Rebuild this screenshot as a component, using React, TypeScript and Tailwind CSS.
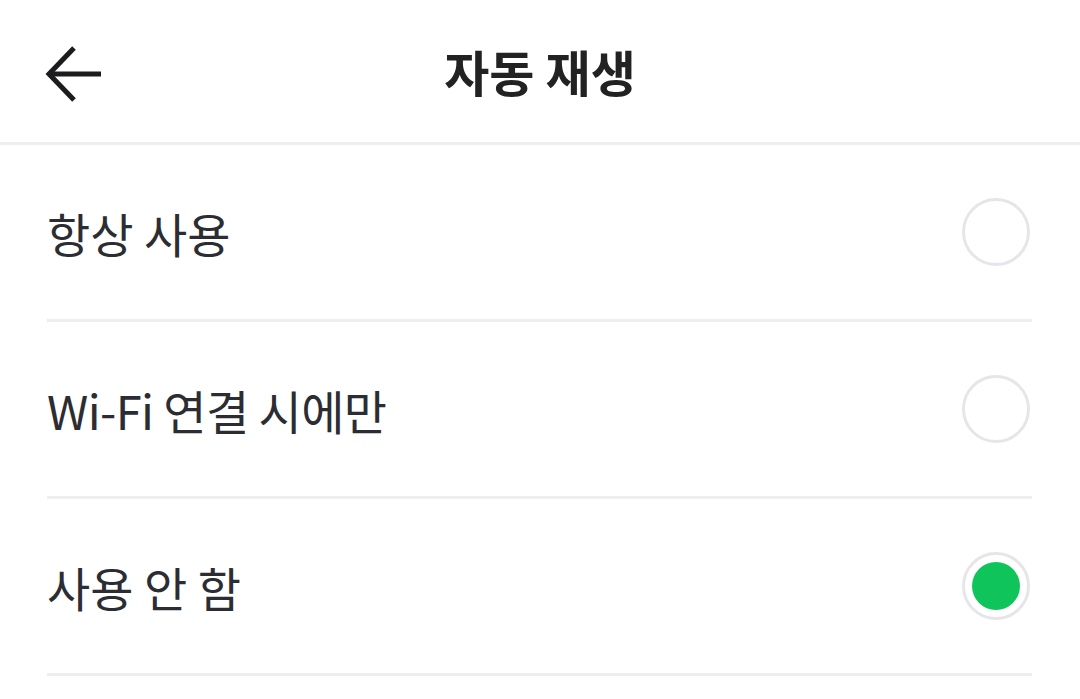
import React from "react";

const items = [
  { label: "항상 사용", selected: false, tight: false },
  { label: "Wi-Fi 연결 시에만", selected: false, tight: true },
  { label: "사용 안 함", selected: true, tight: false },
];

export default function App() {
  return (
    <div
      className="w-[1080px] h-[699px] bg-white overflow-hidden"
      style={{ fontFamily: '"Noto Sans CJK KR", "Noto Sans", sans-serif' }}
    >
      <header className="relative h-[145px] border-b-[3px] border-[#eeeeee] flex items-center justify-center">
        <button className="absolute left-[45px] top-[46px] w-[58px] h-[56px] flex items-center justify-center">
          <svg width="58" height="56" viewBox="0 0 58 56" fill="none">
            <path d="M4 28 H56" stroke="#1c1c1e" strokeWidth="5" />
            <path d="M29 2 L4 28 L29 54" stroke="#1c1c1e" strokeWidth="5" strokeLinejoin="miter" />
          </svg>
        </button>
        <h1 className="text-[49px] font-bold text-[#222222] tracking-[0px] leading-none mb-[2px]">자동 재생</h1>
      </header>
      <ul className="px-[47px] pr-[48px]">
        {items.map((it) => (
          <li
            key={it.label}
            className="h-[177px] border-b-[3px] border-[#eeeeee] flex items-center justify-between"
          >
            <span
              className={
                it.tight
                  ? "text-[47px] text-[#2c2d32] tracking-[-0.6px] leading-none"
                  : "text-[47px] text-[#2c2d32] tracking-[0px] leading-none"
              }
            >
              {it.label}
            </span>
            <span className="w-[68px] h-[68px] rounded-full border-[3px] border-[#e6e6ea] flex items-center justify-center mr-[2px]">
              {it.selected && <span className="w-[48px] h-[48px] rounded-full bg-[#0fc55b]" />}
            </span>
          </li>
        ))}
      </ul>
    </div>
  );
}
